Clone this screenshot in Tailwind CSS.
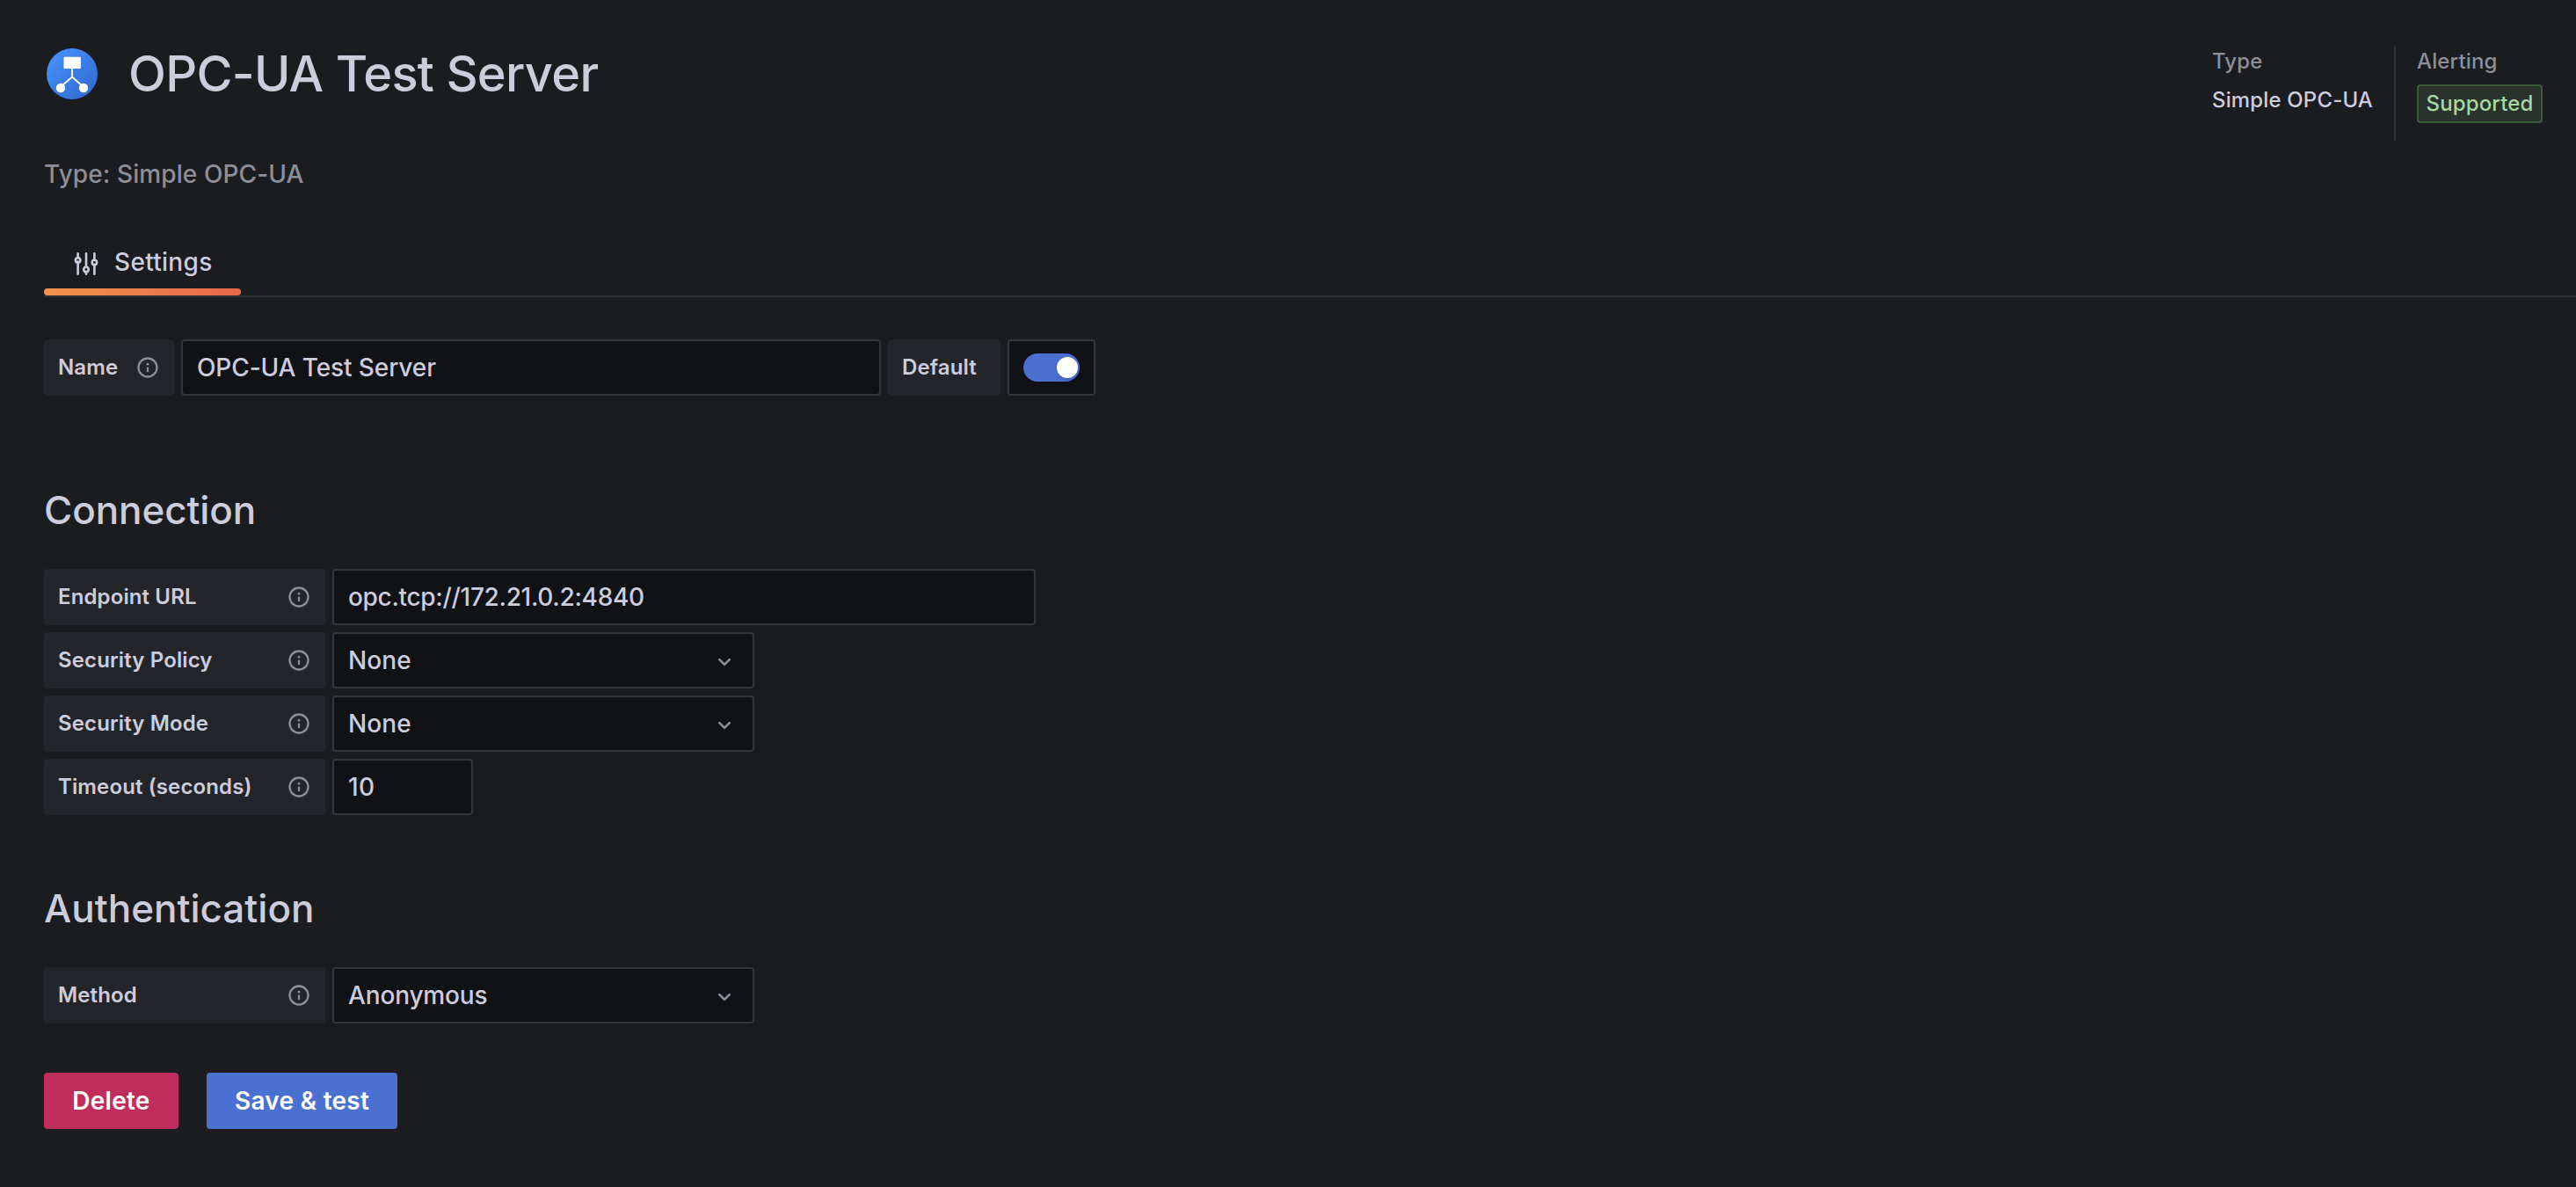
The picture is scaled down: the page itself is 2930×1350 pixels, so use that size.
<!DOCTYPE html>
<html lang="en">
<head>
    <meta charset="UTF-8">
    <meta name="viewport" content="width=device-width, initial-scale=1.0">
    <title>OPC-UA Test Server</title>
    <script src="https://cdn.jsdelivr.net/npm/@tailwindcss/browser@4"></script>
</head>
<body class="bg-[#1b1c20] text-[#ccccdc] font-['Inter',sans-serif] font-medium text-[28px] leading-[44px] tracking-[0.1px] min-h-screen pl-[50px] overflow-hidden">

<!-- Shared icons -->
<svg class="hidden">
    <symbol id="info" viewBox="0 0 24 24">
        <path fill="currentColor" d="M12,2A10,10,0,1,0,22,12,10.01114,10.01114,0,0,0,12,2Zm0,18a8,8,0,1,1,8-8A8.00917,8.00917,0,0,1,12,20Zm0-8.5a1,1,0,0,0-1,1v3a1,1,0,0,0,2,0v-3A1,1,0,0,0,12,11.5Zm0-4a1.25,1.25,0,1,0,1.25,1.25A1.25,1.25,0,0,0,12,7.5Z"/>
    </symbol>
    <symbol id="angle-down" viewBox="0 0 24 24">
        <path fill="currentColor" d="M17,9.17a1,1,0,0,0-1.41,0L12,12.71,8.46,9.17a1,1,0,0,0-1.41,0,1,1,0,0,0,0,1.42l4.24,4.24a1,1,0,0,0,1.42,0L17,10.59A1,1,0,0,0,17,9.17Z"/>
    </symbol>
</svg>

<!-- Page header -->
<header class="flex justify-between pt-[52px] pr-[38px]">
    <div>
        <div class="flex items-center h-16">
            <svg class="w-16 h-16" viewBox="0 0 64 64">
                <defs>
                    <linearGradient id="logo" x1="0" y1="0" x2="1" y2="1">
                        <stop offset="0" stop-color="#4794ff"/>
                        <stop offset="1" stop-color="#2f67cc"/>
                    </linearGradient>
                </defs>
                <circle cx="32" cy="32" r="29" fill="url(#logo)"/>
                <rect x="22.5" y="12.700" width="19.500" height="13.200" rx="1" fill="#fff"/>
                <path d="M32 25v10.500M20 46l12-10.500L44 46" fill="none" stroke="#fff" stroke-width="1.800"/>
                <circle cx="19" cy="48" r="5.200" fill="#fff"/>
                <circle cx="45" cy="48" r="5.200" fill="#fff"/>
            </svg>
            <h1 class="pl-8 text-[56px] leading-[64px] tracking-[-0.72px]">OPC-UA Test Server</h1>
        </div>
        <p class="mt-[60px] text-[#8e8e99]">Type: Simple OPC-UA</p>
    </div>
    <div class="flex h-[108px] text-[24px] leading-[36px] tracking-[0.15px]">
        <div class="pr-6 border-r-2 border-[#2f3035]">
            <div class="text-[#8e8e99] leading-9">Type</div>
            <div class="mt-2">Simple OPC-UA</div>
        </div>
        <div class="pl-6">
            <div class="text-[#8e8e99] leading-9">Alerting</div>
            <div class="mt-2 h-11 w-[143px] flex items-center justify-center rounded-[4px] border-2 border-[#3e5a3e] bg-[#2a322d] text-[#a6d8a0]">Supported</div>
        </div>
    </div>
</header>

<!-- Tabs -->
<nav class="mt-[52px] border-b-2 border-[#2f3035]">
    <div class="w-[224px]">
        <div class="flex items-center h-[56px] pl-8">
            <svg class="w-8 h-8 mr-4" viewBox="0 0 32 32" fill="none" stroke="currentColor" stroke-width="2.600" stroke-linecap="round">
                <path d="M6.600 4.300v4.500M6.600 13.500v14.200M16 4.300v15.200M16 25v2.700M25.400 4.300v7.200M25.400 17v10.700"/>
                <circle cx="6.600" cy="12" r="2.700"/>
                <circle cx="16" cy="22.500" r="2.700"/>
                <circle cx="25.400" cy="14.500" r="2.700"/>
            </svg>
            <span class="pb-1 tracking-[0.3px]">Settings</span>
        </div>
        <div class="h-2 rounded-[4px] bg-linear-to-r from-[#f29149] to-[#e5684a]"></div>
    </div>
</nav>

<form>
    <!-- Name and default -->
    <div class="flex gap-2 mt-12">
        <label class="flex items-center justify-between w-[148px] h-16 pl-4 pr-4 rounded-[4px] bg-[#24252a] text-[24px] font-semibold tracking-[0.12px]">Name
            <svg class="w-7 h-7 text-[#8e8e99]"><use href="#info"/></svg>
        </label>
        <input type="text" value="OPC-UA Test Server" class="w-[796px] h-16 px-4 rounded-[4px] border-2 border-[#35363b] bg-[#111216] tracking-[-0.1px]">
        <label class="flex items-center w-[128px] h-16 pl-4 rounded-[4px] bg-[#24252a] text-[24px] font-semibold tracking-[0.12px]">Default</label>
        <div class="flex items-center w-[100px] h-16 pl-4 rounded-[4px] border-2 border-[#35363b] bg-[#111216]">
            <div class="flex items-center justify-end w-16 h-8 pr-[2px] rounded-full bg-[#4a70d2]">
                <div class="w-6 h-6 rounded-full bg-white shadow-md"></div>
            </div>
        </div>
    </div>

    <!-- Connection -->
    <h3 class="mt-[106px] text-[44px] leading-[48px] tracking-[-0.1px]">Connection</h3>
    <div class="flex flex-col gap-2 mt-[43px]">
        <div class="flex gap-2">
            <label class="flex items-center justify-between w-[320px] h-16 px-4 rounded-[4px] bg-[#24252a] text-[24px] font-semibold tracking-[0.12px]">Endpoint URL
                <svg class="w-7 h-7 text-[#8e8e99]"><use href="#info"/></svg>
            </label>
            <input type="text" value="opc.tcp://172.21.0.2:4840" class="w-[800px] h-16 px-4 rounded-[4px] border-2 border-[#35363b] bg-[#111216] tracking-[-0.32px]">
        </div>
        <div class="flex gap-2">
            <label class="flex items-center justify-between w-[320px] h-16 px-4 rounded-[4px] bg-[#24252a] text-[24px] font-semibold tracking-[0.12px]">Security Policy
                <svg class="w-7 h-7 text-[#8e8e99]"><use href="#info"/></svg>
            </label>
            <div class="flex items-center justify-between w-[480px] h-16 pl-4 pr-4 rounded-[4px] border-2 border-[#35363b] bg-[#111216]">None
                <svg class="w-8 h-8 mt-1 text-[#8e8e99]"><use href="#angle-down"/></svg>
            </div>
        </div>
        <div class="flex gap-2">
            <label class="flex items-center justify-between w-[320px] h-16 px-4 rounded-[4px] bg-[#24252a] text-[24px] font-semibold tracking-[0.12px]">Security Mode
                <svg class="w-7 h-7 text-[#8e8e99]"><use href="#info"/></svg>
            </label>
            <div class="flex items-center justify-between w-[480px] h-16 pl-4 pr-4 rounded-[4px] border-2 border-[#35363b] bg-[#111216]">None
                <svg class="w-8 h-8 mt-1 text-[#8e8e99]"><use href="#angle-down"/></svg>
            </div>
        </div>
        <div class="flex gap-2">
            <label class="flex items-center justify-between w-[320px] h-16 px-4 rounded-[4px] bg-[#24252a] text-[24px] font-semibold tracking-[0.12px]">Timeout (seconds)
                <svg class="w-7 h-7 text-[#8e8e99]"><use href="#info"/></svg>
            </label>
            <input type="text" value="10" class="w-[160px] h-16 px-4 rounded-[4px] border-2 border-[#35363b] bg-[#111216] tracking-[0.3px]">
        </div>
    </div>

    <!-- Authentication -->
    <h3 class="mt-[82px] text-[44px] leading-[48px] tracking-normal">Authentication</h3>
    <div class="flex gap-2 mt-[43px]">
        <label class="flex items-center justify-between w-[320px] h-16 px-4 rounded-[4px] bg-[#24252a] text-[24px] font-semibold tracking-[0.12px]">Method
            <svg class="w-7 h-7 text-[#8e8e99]"><use href="#info"/></svg>
        </label>
        <div class="flex items-center justify-between w-[480px] h-16 pl-4 pr-4 rounded-[4px] border-2 border-[#35363b] bg-[#111216] tracking-[-0.15px]">Anonymous
            <svg class="w-8 h-8 mt-1 text-[#8e8e99]"><use href="#angle-down"/></svg>
        </div>
    </div>

    <!-- Actions -->
    <div class="flex gap-8 mt-14 text-white font-semibold tracking-[0.25px]">
        <button type="button" class="w-[153px] h-16 rounded-[4px] bg-[#c02d5c]">Delete</button>
        <button type="submit" class="w-[217px] h-16 rounded-[4px] bg-[#4a70d2]">Save &amp; test</button>
    </div>
</form>

</body>
</html>
